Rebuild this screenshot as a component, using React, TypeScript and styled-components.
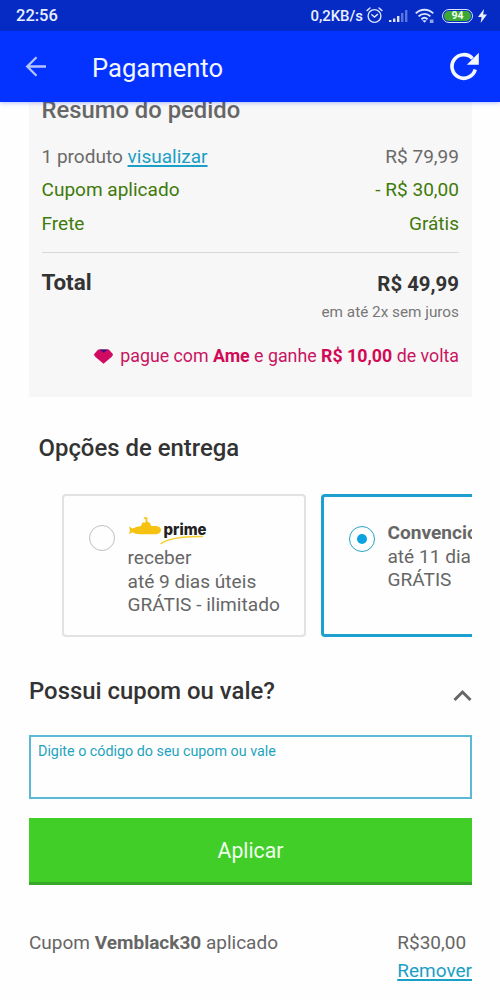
import React from 'react';
import styled, { createGlobalStyle } from 'styled-components';

const GlobalStyle = createGlobalStyle`
  * { box-sizing: border-box; }
  body { margin: 0; background: #fefefe; font-family: Roboto, "Liberation Sans", sans-serif; color: #666; }
  h1, h2, p { margin: 0; }
`;

const Screen = styled.div`
  width: 500px;
  height: 1000px;
  overflow: hidden;
  display: flex;
  flex-direction: column;
`;

const StatusBar = styled.div`
  height: 31px;
  flex: none;
  padding: 0 13px 0 16px;
  background: #062bc4;
  color: #eaf0ff;
  display: flex;
  align-items: center;
  justify-content: space-between;
  font-weight: 500;
  font-size: 16.5px;
`;

const StatusIcons = styled.div`
  display: flex;
  align-items: center;
  font-size: 14.9px;
  svg { display: block; }
`;

const Gap = styled.span<{ $w: number }>`
  width: ${(p) => p.$w}px;
`;

const AppBar = styled.header`
  height: 71px;
  flex: none;
  position: relative;
  z-index: 1;
  padding: 1px 20px 0 24px;
  background: #0433ff;
  box-shadow: 0 1px 4px rgba(4, 51, 255, 0.3);
  display: flex;
  align-items: center;
`;

const AppTitle = styled.h1`
  flex: 1;
  margin: 2px 0 0 44px;
  color: #f2f6ff;
  font-size: 25.6px;
  font-weight: 400;
  line-height: 30px;
`;

const Content = styled.main`
  flex: 1;
  min-height: 0;
  overflow: hidden;
  padding: 0 28px 0 29px;
`;

const SummaryCard = styled.section`
  display: flow-root;
  height: 295px;
  padding: 0 13px 0 12.5px;
  background: #f7f7f7;
`;

const SummaryTitle = styled.h2`
  margin-top: -6px;
  padding-bottom: 16px;
  font-size: 23.8px;
  line-height: 28px;
  font-weight: 500;
`;

const SummaryRow = styled.div<{ $green?: boolean }>`
  display: flex;
  justify-content: space-between;
  font-size: 19.050px;
  line-height: 33.4px;
  color: ${(p) => (p.$green ? '#3f7a0b' : '#6a6a6a')};
`;

const Link = styled.a`
  color: #1a9fc6;
  text-decoration: underline;
  text-decoration-thickness: 1.5px;
  text-underline-offset: 2px;
`;

const TotalRow = styled.div`
  margin-top: 12px;
  padding-top: 16px;
  border-top: 1px solid #d9d9d9;
  display: flex;
  justify-content: space-between;
  color: #333;
  font-weight: 700;
`;

const TotalLabel = styled.span`
  font-size: 22.4px;
  line-height: 27px;
`;

const TotalPrice = styled.span`
  font-size: 20.4px;
  line-height: 31.4px;
`;

const Installments = styled.p`
  text-align: right;
  font-size: 15.3px;
  line-height: 22px;
  color: #777;
`;

const Cashback = styled.p`
  margin-top: 20px;
  display: flex;
  justify-content: flex-end;
  align-items: center;
  gap: 7px;
  font-size: 17.8px;
  line-height: 26px;
  color: #c9145f;
  b { color: #d00a56; }
  svg { margin-top: 1px; }
`;

const SectionTitle = styled.h2`
  font-size: 23.9px;
  line-height: 30px;
  font-weight: 500;
  color: #333;
`;

const DeliveryTitle = styled(SectionTitle)`
  margin: 36px 0 0 9.5px;
`;

const Options = styled.div`
  margin: 31px 0 0 33px;
  display: flex;
  gap: 15px;
  overflow: hidden;
`;

const OptionCard = styled.div<{ $selected?: boolean }>`
  flex: none;
  width: 244.4px;
  height: 143px;
  padding: ${(p) => (p.$selected ? '24px 0 0 24.6px' : '20px 0 0 25px')};
  border: ${(p) => (p.$selected ? '3px solid #1d9fd0' : '2px solid #e2e2e2')};
  border-radius: 4px;
  display: flex;
  gap: 12.5px;
`;

const Radio = styled.span<{ $selected?: boolean }>`
  flex: none;
  width: 26px;
  height: 26px;
  margin-top: ${(p) => (p.$selected ? '5px' : '9px')};
  border: 1.3px solid ${(p) => (p.$selected ? '#28a3c4' : '#c0c0c0')};
  border-radius: 50%;
  display: grid;
  place-items: center;
  &::after {
    content: '';
    width: 10px;
    height: 10px;
    border-radius: 50%;
    background: ${(p) => (p.$selected ? '#0aa3e0' : 'transparent')};
  }
`;

const OptionText = styled.div`
  font-size: 19.1px;
  line-height: 23.7px;
  white-space: nowrap;
  svg { display: block; }
`;

const CouponHeader = styled.div`
  margin-top: 39px;
  display: flex;
  justify-content: space-between;
  svg { margin-top: 13px; }
`;

const CouponField = styled.label`
  margin-top: 29px;
  height: 64px;
  padding: 5px 7px;
  border: 2px solid #5bb9d6;
  display: block;
  color: #1fa3bd;
  font-size: 14.3px;
  line-height: 18px;
`;

const ApplyButton = styled.button`
  margin-top: 19px;
  width: 100%;
  height: 67px;
  padding: 2px 0 0;
  border: 0;
  border-bottom: 3px solid #35a82a;
  background: #41ce29;
  color: #f0ffec;
  font: 400 21.2px/1 Roboto, "Liberation Sans", sans-serif;
`;

const Applied = styled.div`
  margin-top: 44px;
  display: flex;
  justify-content: space-between;
  font-size: 19px;
  line-height: 28px;
`;

const AppliedAmount = styled.div`
  display: flex;
  flex-direction: column;
`;

const AlarmIcon = () => (
  <svg width="17" height="17" viewBox="0 0 17 17" fill="none" stroke="#dbe5ff" strokeWidth="1.4" strokeLinecap="round">
    <circle cx="8.5" cy="9" r="6.4" />
    <path d="M1 3.6 4 1M16 3.6 13 1M5.8 7.8 8.5 10l3-2.6" />
  </svg>
);

const SignalIcon = () => (
  <svg width="19" height="14" viewBox="0 0 19 14" fill="#dbe5ff">
    <path d="M0 11h2.4v2H0zM4 9.5h2.4V13H4zM8 7h2.4v6H8z" />
    <path d="M12 4h2.4v9H12zM16 1h2.4v12H16z" opacity=".4" />
  </svg>
);

const WifiIcon = () => (
  <svg width="20" height="16" viewBox="0 0 20 16" fill="none" stroke="#dbe5ff" strokeWidth="1.9">
    <path d="M.8 5.4c5-4.8 12.4-4.8 17.4 0M3.6 8.4c3.4-3.3 8.4-3.3 11.8 0M6.4 11.2c1.9-1.7 4.3-1.7 6.2 0" />
    <path d="M7.3 12.3h4.4L9.5 14.8z" fill="#dbe5ff" stroke="none" />
    <path d="M14.8 11.5h3.7v3.5h-3.7z" fill="#8fa5ea" stroke="none" />
  </svg>
);

const Battery = styled.span`
  width: 31px;
  height: 14px;
  border: 1.5px solid #dbe5ff;
  border-radius: 7px;
  padding: 1px;
  display: flex;
`;

const BatteryLevel = styled.span`
  flex: 1;
  border-radius: 5px;
  background: #3da836;
  color: #f2fff0;
  font-size: 10.5px;
  line-height: 10px;
  font-weight: 700;
  text-align: center;
`;

const BoltIcon = () => (
  <svg width="9" height="14" viewBox="0 0 9 14" fill="#eaf0ff">
    <path d="M6 0 0 8h3.6L2.6 14 9 5.6H5.2z" />
  </svg>
);

const BackIcon = () => (
  <svg width="24" height="24" viewBox="0 0 24 24" fill="none" stroke="#b4c4ff" strokeWidth="2.3">
    <path d="M22 11.5H3M12.5 2.2 3.2 11.5l9.3 9.3" />
  </svg>
);

const ReloadIcon = () => (
  <svg width="32" height="32" viewBox="0 0 32 32">
    <path d="M27.2 18.5A11.8 11.8 0 1 1 24.5 7.5" fill="none" stroke="#f4f7ff" strokeWidth="3.6" />
    <path d="M30.8 1.8v12H18.8z" fill="#f4f7ff" />
  </svg>
);

const AmeIcon = () => (
  <svg width="19" height="15" viewBox="0 0 19 15">
    <path d="M4.2.5h10.6L19 5.3Q18.8 7 17.5 8L9.5 14.8 1.5 8Q.2 7 0 5.3z" fill="#cf0a60" />
    <path d="M5.5.5h8.3L9.7 3.8z" fill="#3b1182" />
  </svg>
);

const PrimeLogo = () => (
  <svg width="82" height="30" viewBox="0 0 82 30">
    <path d="M1 10.5 4.500 12.500Q8 10.500 13 10L14.500 6.500H17.500V2.800H15.800V1.300H19.300V5.500L22 7 23.200 10H28Q33 10.500 33 14T28 18.200H12Q7 18.200 4.500 16.200L1 18.200 2 14.400z" fill="#f5c211" />
    <path d="M32.5 28Q44 20 75 20.6" fill="none" stroke="#f5cf2e" strokeWidth="1.5" />
    <text x="35.5" y="19" fontFamily="Inter, sans-serif" fontWeight="800" fontSize="15.5" textLength="43" lengthAdjust="spacingAndGlyphs" fill="#222">prime</text>
  </svg>
);

const ChevronUpIcon = () => (
  <svg width="19" height="13" viewBox="0 0 19 13" fill="none" stroke="#666" strokeWidth="3">
    <path d="M1.5 11 9.5 3l8 8" />
  </svg>
);

export default function App() {
  return (
    <Screen>
      <GlobalStyle />
      <StatusBar>
        <span>22:56</span>
        <StatusIcons>
          <span>0,2KB/s</span>
          <Gap $w={3} />
          <AlarmIcon />
          <Gap $w={6} />
          <SignalIcon />
          <Gap $w={7} />
          <WifiIcon />
          <Gap $w={7} />
          <Battery><BatteryLevel>94</BatteryLevel></Battery>
          <Gap $w={5} />
          <BoltIcon />
        </StatusIcons>
      </StatusBar>
      <AppBar>
        <BackIcon />
        <AppTitle>Pagamento</AppTitle>
        <ReloadIcon />
      </AppBar>
      <Content>
        <SummaryCard>
          <SummaryTitle>Resumo do pedido</SummaryTitle>
          <SummaryRow>
            <span>1 produto <Link>visualizar</Link></span>
            <span>R$ 79,99</span>
          </SummaryRow>
          <SummaryRow $green>
            <span>Cupom aplicado</span>
            <span>- R$ 30,00</span>
          </SummaryRow>
          <SummaryRow $green>
            <span>Frete</span>
            <span>Grátis</span>
          </SummaryRow>
          <TotalRow>
            <TotalLabel>Total</TotalLabel>
            <TotalPrice>R$ 49,99</TotalPrice>
          </TotalRow>
          <Installments>em até 2x sem juros</Installments>
          <Cashback>
            <AmeIcon />
            <span>pague com <b>Ame</b> e ganhe <b>R$ 10,00</b> de volta</span>
          </Cashback>
        </SummaryCard>
        <DeliveryTitle>Opções de entrega</DeliveryTitle>
        <Options>
          <OptionCard>
            <Radio />
            <OptionText>
              <PrimeLogo />
              receber<br />até 9 dias úteis<br />GRÁTIS - ilimitado
            </OptionText>
          </OptionCard>
          <OptionCard $selected>
            <Radio $selected />
            <OptionText>
              <b>Convencional</b><br />até 11 dias úteis<br />GRÁTIS
            </OptionText>
          </OptionCard>
        </Options>
        <CouponHeader>
          <SectionTitle>Possui cupom ou vale?</SectionTitle>
          <ChevronUpIcon />
        </CouponHeader>
        <CouponField>Digite o código do seu cupom ou vale</CouponField>
        <ApplyButton>Aplicar</ApplyButton>
        <Applied>
          <span>Cupom <b>Vemblack30</b> aplicado</span>
          <AppliedAmount>
            <span>R$30,00</span>
            <Link>Remover</Link>
          </AppliedAmount>
        </Applied>
      </Content>
    </Screen>
  );
}
